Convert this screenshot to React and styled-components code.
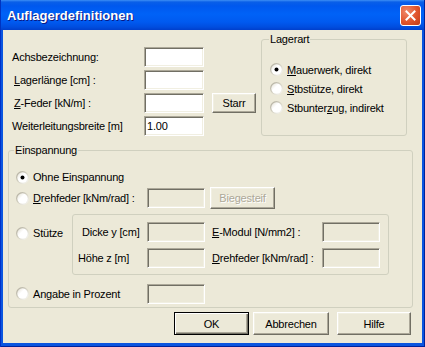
import React from 'react';
import styled, { createGlobalStyle } from 'styled-components';

const GlobalStyle = createGlobalStyle`
  html, body {
    margin: 0;
    padding: 0;
    background: #ece9d8;
  }
  body {
    font-family: "Liberation Sans", Arial, sans-serif;
    font-size: 11px;
    letter-spacing: -0.2px;
    color: #000;
  }
`;

const Window = styled.div`
  width: 425px;
  height: 347px;
  display: flex;
  flex-direction: column;
`;

const TitleBar = styled.div`
  height: 30px;
  flex: none;
  display: flex;
  align-items: center;
  justify-content: space-between;
  padding: 0 4px 0 7px;
  box-sizing: border-box;
  background: linear-gradient(
    to bottom,
    #3d8ff5 0px,
    #0a5fe8 2px,
    #0058ee 6px,
    #0062f7 14px,
    #005af0 22px,
    #004ddf 27px,
    #003fcc 30px
  );
  box-shadow: inset 1px 0 #0033c0, inset -1px 0 #00229a;
`;

const Title = styled.span`
  font-family: "Liberation Sans", Arial, sans-serif;
  font-weight: bold;
  font-size: 13px;
  letter-spacing: 0;
  color: #fff;
  text-shadow: 1px 1px #0a1883;
  margin-top: 1px;
`;

const CloseButton = styled.div`
  width: 21px;
  height: 21px;
  box-sizing: border-box;
  border: 1px solid #fff;
  border-radius: 3px;
  background: radial-gradient(circle at 30% 30%, #f0896a 0%, #e0542c 55%, #c23b16 100%);
  display: flex;
  align-items: center;
  justify-content: center;
  margin-top: 1px;
`;

const Frame = styled.div`
  flex: 1;
  display: flex;
  padding: 0 3px 4px 3px;
  background: #0a55e0;
  box-shadow: inset 1px 0 #0030c8, inset -1px 0 #00229a, inset 0 -1px #00229a;
`;

const Body = styled.div`
  flex: 1;
  background: #ece9d8;
  padding: 3px 9px 0 5px;
  display: flex;
  flex-direction: column;
`;

const TopRow = styled.div`
  height: 111px;
  display: flex;
  align-items: flex-start;
`;

const FieldGrid = styled.div`
  display: grid;
  grid-template-columns: 132px 60px 52px;
  grid-auto-rows: 20px;
  row-gap: 3px;
  padding: 14px 0 0 4px;
`;

const FieldLabel = styled.label`
  grid-column: 1;
  display: flex;
  align-items: center;
  padding-left: ${(p) => (p.$indent ? 2 : 0)}px;
  white-space: nowrap;
`;

const Key = styled.span`
  text-decoration: underline;
`;

const TextBox = styled.input`
  width: ${(p) => p.$w || 60}px;
  height: 20px;
  box-sizing: border-box;
  margin: 0;
  padding: 0 2px;
  font-family: inherit;
  font-size: 11px;
  letter-spacing: -0.2px;
  color: #000;
  background: #fff;
  border: 1px solid;
  border-color: #aca899 #fff #fff #aca899;
  box-shadow: inset 1px 1px #716f64, inset -1px -1px #f1efe2;
  outline: none;
  flex: none;

  &:disabled {
    background: #ece9d8;
  }
`;

const Button = styled.button`
  width: ${(p) => p.$w}px;
  height: ${(p) => p.$h || 23}px;
  margin: 0 0 0 ${(p) => p.$ml || 0}px;
  padding: 0;
  flex: none;
  font-family: inherit;
  font-size: 11px;
  letter-spacing: -0.2px;
  color: #000;
  background: #ece9d8;
  border: 1px solid;
  border-color: #fff #716f64 #716f64 #fff;
  box-shadow: inset -1px -1px #aca899, inset 1px 1px #f1efe2;

  &:disabled {
    color: #aca899;
    text-shadow: 1px 1px #fff;
  }
`;

const DefaultButton = styled(Button)`
  border: 1px solid #000;
  box-shadow: inset 1px 1px #fff, inset -1px -1px #716f64, inset -2px -2px #aca899;
`;

const Group = styled.fieldset`
  margin: 0 ${(p) => p.$mr || 0}px 0 ${(p) => (p.$ml === 'auto' ? 'auto' : `${p.$ml || 0}px`)};
  min-inline-size: 0;
  width: ${(p) => (p.$w ? `${p.$w}px` : 'auto')};
  height: ${(p) => (p.$h ? `${p.$h}px` : 'auto')};
  box-sizing: border-box;
  border: 1px solid #d0d0bf;
  border-radius: 3px;
  padding: ${(p) => p.$pad};
`;

const Legend = styled.legend`
  padding: 0 1px;
  margin-left: ${(p) => p.$ml || 0}px;
  line-height: 13px;
`;

const RadioList = styled.div`
  display: flex;
  flex-direction: column;
`;

const RadioLabel = styled.label`
  display: flex;
  align-items: center;
  gap: 4px;
  height: ${(p) => p.$h || 14}px;
  width: ${(p) => (p.$w ? `${p.$w}px` : 'auto')};
  margin-top: ${(p) => p.$mt || 0}px;
  flex: none;
  white-space: nowrap;
`;

const OptionRow = styled.div`
  display: flex;
  align-items: ${(p) => (p.$top ? 'flex-start' : 'center')};
  height: ${(p) => (p.$h ? `${p.$h}px` : 'auto')};
  margin-top: ${(p) => p.$mt || 0}px;
`;

const InnerBox = styled.div`
  width: 317px;
  box-sizing: border-box;
  border: 1px solid #d0d0bf;
  border-radius: 3px;
  padding: 7px 8px 6px 0;
  display: grid;
  grid-template-columns: 74px 58px 117px 58px;
  grid-auto-rows: 20px;
  row-gap: 6px;
`;

const InnerLabel = styled.label`
  display: flex;
  align-items: center;
  padding-left: ${(p) => p.$pl || 0}px;
  white-space: nowrap;
`;

const ButtonBar = styled.div`
  display: flex;
  justify-content: flex-end;
  margin-top: 4px;
  padding-right: 2px;
`;

const Radio = ({ checked }) => (
  <svg width="13" height="13" viewBox="0 0 13 13" style={{ flex: 'none' }}>
    <defs>
      <linearGradient id="rOuter" x1="0" y1="0" x2="1" y2="1">
        <stop offset="0" stopColor="#a9a596" />
        <stop offset="0.55" stopColor="#d9d6c8" />
        <stop offset="1" stopColor="#ffffff" />
      </linearGradient>
      <linearGradient id="rInner" x1="0" y1="0" x2="1" y2="1">
        <stop offset="0" stopColor="#e2dfd2" />
        <stop offset="0.4" stopColor="#ffffff" />
        <stop offset="1" stopColor="#ffffff" />
      </linearGradient>
    </defs>
    <circle cx="6.5" cy="6.5" r="6.5" fill="url(#rOuter)" />
    <circle cx="6.5" cy="6.5" r="5.2" fill="url(#rInner)" />
    {checked && <circle cx="6.5" cy="6.5" r="2" fill="#000" />}
  </svg>
);

const CloseIcon = () => (
  <svg width="11" height="11" viewBox="0 0 11 11">
    <path d="M1.5 1.5 L9.5 9.5 M9.5 1.5 L1.5 9.5" stroke="#fff" strokeWidth="2" strokeLinecap="square" />
  </svg>
);

export default function App() {
  return (
    <>
      <GlobalStyle />
      <Window>
        <TitleBar>
          <Title>Auflagerdefinitionen</Title>
          <CloseButton>
            <CloseIcon />
          </CloseButton>
        </TitleBar>
        <Frame>
          <Body>
            <TopRow>
              <FieldGrid>
                <FieldLabel>Achsbezeichnung:</FieldLabel>
                <TextBox />
                <FieldLabel $indent>
                  <Key>L</Key>agerlänge [cm] :
                </FieldLabel>
                <TextBox />
                <FieldLabel $indent>
                  <Key>Z</Key>-Feder [kN/m] :
                </FieldLabel>
                <TextBox />
                <Button $w={44} $h={20} $ml={8}>Starr</Button>
                <FieldLabel>Weiterleitungsbreite [m]</FieldLabel>
                <TextBox defaultValue="1.00" />
              </FieldGrid>

              <Group $ml="auto" $mr={6} $w={146} $h={103} $pad="14px 8px 0 8px">
                <Legend $ml={-1}>Lagerart</Legend>
                <RadioList>
                  <RadioLabel $h={19}>
                    <Radio checked />
                    <span>
                      <Key>M</Key>auerwerk, direkt
                    </span>
                  </RadioLabel>
                  <RadioLabel $h={19}>
                    <Radio />
                    <span>
                      <Key>S</Key>tbstütze, direkt
                    </span>
                  </RadioLabel>
                  <RadioLabel $h={19}>
                    <Radio />
                    <span>
                      Stbunter<Key>z</Key>ug, indirekt
                    </span>
                  </RadioLabel>
                </RadioList>
              </Group>
            </TopRow>

            <Group $pad="10px 0 3px 7px">
              <Legend $ml={-2}>Einspannung</Legend>
              <OptionRow $h={20}>
                <RadioLabel>
                  <Radio checked />
                  <span>Ohne Einspannung</span>
                </RadioLabel>
              </OptionRow>
              <OptionRow $h={22}>
                <RadioLabel $w={131}>
                  <Radio />
                  <span>
                    <Key>D</Key>rehfeder [kNm/rad] :
                  </span>
                </RadioLabel>
                <TextBox $w={58} disabled />
                <Button $w={65} $h={22} $ml={5} disabled>
                  Biegesteif
                </Button>
              </OptionRow>
              <OptionRow $top $mt={5}>
                <RadioLabel $w={56} $mt={12}>
                  <Radio />
                  <span>Stütze</span>
                </RadioLabel>
                <InnerBox>
                  <InnerLabel $pl={9}>Dicke y [cm]</InnerLabel>
                  <TextBox $w={58} disabled />
                  <InnerLabel $pl={7}>
                    <Key>E</Key>-Modul [N/mm2] :
                  </InnerLabel>
                  <TextBox $w={58} disabled />
                  <InnerLabel $pl={5}>Höhe z [m]</InnerLabel>
                  <TextBox $w={58} disabled />
                  <InnerLabel $pl={7}>
                    <Key>D</Key>rehfeder [kNm/rad] :
                  </InnerLabel>
                  <TextBox $w={58} disabled />
                </InnerBox>
              </OptionRow>
              <OptionRow $h={21} $mt={8}>
                <RadioLabel $w={131}>
                  <Radio />
                  <span>Angabe in Prozent</span>
                </RadioLabel>
                <TextBox $w={58} disabled />
              </OptionRow>
            </Group>

            <ButtonBar>
              <DefaultButton $w={75}>OK</DefaultButton>
              <Button $w={76} $ml={4}>Abbrechen</Button>
              <Button $w={74} $ml={8}>Hilfe</Button>
            </ButtonBar>
          </Body>
        </Frame>
      </Window>
    </>
  );
}
